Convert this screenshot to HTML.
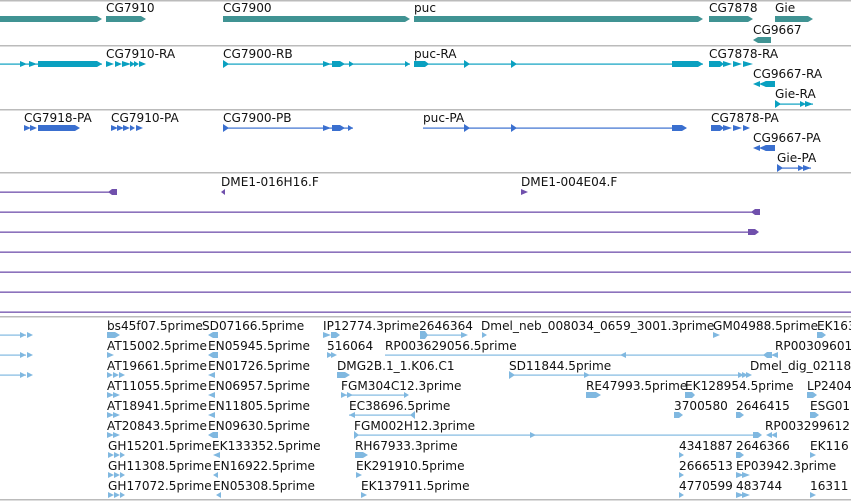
<!DOCTYPE html>
<html><head><meta charset="utf-8"><style>
html,body{margin:0;padding:0;background:#fff;width:851px;height:501px;overflow:hidden}
svg{display:block}
text{font-family:"DejaVu Sans","Liberation Sans",sans-serif;font-size:12.1px;fill:#111}
</style></head><body>
<svg width="851" height="501" viewBox="0 0 851 501">
<g fill="#bbb">
<rect x="0" y="0" width="851" height="1.5"/>
<rect x="0" y="45" width="851" height="1.5"/>
<rect x="0" y="109" width="851" height="1.5"/>
<rect x="0" y="172" width="851" height="1.5"/>
<rect x="0" y="316" width="851" height="1.5"/>
<rect x="0" y="499" width="851" height="1.5"/>
</g>
<g fill="#409393">
<polygon points="0,16 97,16 102,19 97,22 0,22"/>
<polygon points="106,16 141,16 146,19 141,22 106,22"/>
<polygon points="223,16 405,16 410,19 405,22 223,22"/>
<polygon points="414,16 698,16 703,19 698,22 414,22"/>
<polygon points="709,16 748,16 753,19 748,22 709,22"/>
<polygon points="775,16 808,16 813,19 808,22 775,22"/>
<polygon points="771,37 758,37 753,40 758,43 771,43"/>
</g>
<text x="106" y="12">CG7910</text>
<text x="223" y="12">CG7900</text>
<text x="414" y="12">puc</text>
<text x="709" y="12">CG7878</text>
<text x="775" y="12">Gie</text>
<text x="753" y="34">CG9667</text>
<g fill="#0aa0c0" stroke="none">
<rect x="0" y="63.5" width="102" height="1.2"/>
<polygon points="20,61 27,64 20,67"/><polygon points="29,61 37,64 29,67"/>
<polygon points="38,61 97,61 102,64 97,67 38,67"/>
<polygon points="106,61 114,64 106,67"/><polygon points="115,61 122,64 115,67"/><polygon points="122,61 131,64 122,67"/><polygon points="130,61 135,64 130,67"/><polygon points="134,61 139,64 134,67"/><polygon points="139,61 146,64 139,67"/>
<rect x="223" y="63.5" width="187" height="1.2"/>
<polygon points="223,60 229,64 223,68"/>
<polygon points="323,61 331,64 323,67"/><polygon points="332,61 340,61 345,64 340,67 332,67"/><polygon points="349,61 354,64 349,67"/><polygon points="405,61 410,64 405,67"/>
<rect x="414" y="63.5" width="289" height="1.2"/>
<polygon points="414,61 425,61 429,64 425,67 414,67"/>
<polygon points="464,60 470,64 464,68"/><polygon points="511,60 517,64 511,68"/>
<polygon points="672,61 698,61 703,64 698,67 672,67"/>
<polygon points="709,61 720,61 724,64 720,67 709,67"/><polygon points="723,61 732,64 723,67"/><polygon points="733,61 742,64 733,67"/><polygon points="743,61 753,64 743,67"/>
<polygon points="775,81 766,81 761,84 766,87 775,87"/><polygon points="766,81 759,84 766,87"/><polygon points="760,81 753,84 760,87"/>
<rect x="775" y="103.5" width="38" height="1.2"/>
<polygon points="775,100 781,104 775,108"/><polygon points="800,101 806,104 800,107"/><polygon points="805,101 813,104 805,107"/>
</g>
<text x="106" y="58">CG7910-RA</text>
<text x="223" y="58">CG7900-RB</text>
<text x="414" y="58">puc-RA</text>
<text x="709" y="58">CG7878-RA</text>
<text x="753" y="78">CG9667-RA</text>
<text x="775" y="98">Gie-RA</text>
<g fill="#3a6fcf">
<polygon points="24,125 31,128 24,131"/><polygon points="30,125 37,128 30,131"/>
<polygon points="38,125 75,125 80,128 75,131 38,131"/>
<polygon points="111,125 118,128 111,131"/><polygon points="117,125 124,128 117,131"/><polygon points="123,125 130,128 123,131"/><polygon points="130,125 135,128 130,131"/><polygon points="136,125 143,128 136,131"/>
<rect x="223" y="127.5" width="130" height="1.2"/>
<polygon points="223,124 229,128 223,132"/>
<polygon points="323,125 331,128 323,131"/><polygon points="332,125 340,125 345,128 340,131 332,131"/><polygon points="348,125 353,128 348,131"/>
<rect x="423" y="127.5" width="263" height="1.2"/>
<polygon points="464,124 470,128 464,132"/><polygon points="511,124 517,128 511,132"/>
<polygon points="672,125 682,125 687,128 682,131 672,131"/>
<polygon points="711,125 720,125 724,128 720,131 711,131"/><polygon points="723,125 732,128 723,131"/><polygon points="733,125 742,128 733,131"/><polygon points="743,125 750,128 743,131"/>
<polygon points="775,145 766,145 761,148 766,151 775,151"/><polygon points="766,145 759,148 766,151"/><polygon points="760,145 753,148 760,151"/>
<rect x="777" y="167.5" width="34" height="1.2"/>
<polygon points="777,164 783,168 777,172"/><polygon points="798,165 804,168 798,171"/><polygon points="803,165 811,168 803,171"/>
</g>
<text x="24" y="122">CG7918-PA</text>
<text x="111" y="122">CG7910-PA</text>
<text x="223" y="122">CG7900-PB</text>
<text x="423" y="122">puc-PA</text>
<text x="711" y="122">CG7878-PA</text>
<text x="753" y="142">CG9667-PA</text>
<text x="777" y="162">Gie-PA</text>
<g fill="#7050ac">
<rect x="0" y="191.5" width="112" height="1.3"/>
<polygon points="117,189 112,189 108,192 112,195 117,195"/>
<polygon points="225,189 221,192 225,195"/>
<polygon points="521,189 528,192 521,195"/>
<rect x="0" y="211.5" width="755" height="1.3"/>
<polygon points="760,209 755,209 751,212 755,215 760,215"/>
<rect x="0" y="231.5" width="750" height="1.3"/>
<polygon points="748,229 755,229 759,232 755,235 748,235"/>
<rect x="0" y="251.5" width="851" height="1.3"/>
<rect x="0" y="271.5" width="851" height="1.3"/>
<rect x="0" y="291.5" width="851" height="1.3"/>
<rect x="0" y="311.5" width="851" height="1.3"/>
</g>
<text x="221" y="186">DME1-016H16.F</text>
<text x="521" y="186">DME1-004E04.F</text>
<g fill="#80b8e0">
<rect x="0" y="334.5" width="26" height="1.2"/><polygon points="20,332 26,335 20,338"/><polygon points="27,332 33,335 27,338"/>
<rect x="0" y="354.5" width="26" height="1.2"/><polygon points="20,352 26,355 20,358"/><polygon points="27,352 33,355 27,358"/>
<rect x="0" y="374.5" width="26" height="1.2"/><polygon points="20,372 26,375 20,378"/><polygon points="27,372 33,375 27,378"/>
<polygon points="107,332 115,332 120,335 115,338 107,338"/>
<polygon points="218,332 213,332 208,335 213,338 218,338"/>
<polygon points="323,332 331,335 323,338"/><polygon points="331,332 336,332 340,335 336,338 331,338"/>
<rect x="420" y="334.5" width="45" height="1.2"/><polygon points="420,331 425,331 428,335 425,339 420,339"/><polygon points="461,332 468,335 461,338"/>
<polygon points="482,332 487,335 482,338"/>
<polygon points="713,332 720,335 713,338"/>
<polygon points="817,332 822,332 826,335 822,338 817,338"/>
<polygon points="107,352 114,355 107,358"/>
<polygon points="218,352 213,352 208,355 213,358 218,358"/>
<polygon points="327,352 333,355 327,358"/><polygon points="331,352 337,355 331,358"/>
<rect x="385" y="354.5" width="390" height="1.2"/><polygon points="626,352 620,355 626,358"/>
<polygon points="772,352 767,352 763,355 767,358 772,358"/><polygon points="778,352 771,355 778,358"/>
<polygon points="107,372 113,375 107,378"/><polygon points="113,372 119,375 113,378"/><polygon points="119,372 125,375 119,378"/>
<polygon points="215,372 208,375 215,378"/>
<polygon points="337,372 345,372 350,375 345,378 337,378"/>
<rect x="509" y="374.5" width="241" height="1.2"/><polygon points="509,371 515,375 509,379"/><polygon points="584,372 590,375 584,378"/>
<polygon points="738,372 744,375 738,378"/><polygon points="742,372 748,375 742,378"/><polygon points="746,372 752,375 746,378"/>
<polygon points="107,392 114,395 107,398"/><polygon points="113,392 120,395 113,398"/>
<polygon points="215,392 208,395 215,398"/>
<rect x="341" y="394.5" width="66" height="1.2"/><polygon points="341,392 347,395 341,398"/><polygon points="347,392 353,395 347,398"/><polygon points="404,392 409,395 404,398"/>
<polygon points="586,392 596,392 601,395 596,398 586,398"/>
<polygon points="685,392 692,392 695,395 692,398 685,398"/>
<polygon points="807,392 813,392 817,395 813,398 807,398"/>
<polygon points="107,412 114,415 107,418"/><polygon points="113,412 120,415 113,418"/>
<polygon points="215,412 208,415 215,418"/>
<rect x="349" y="414.5" width="66" height="1.2"/><polygon points="355,412 349,415 355,418"/><polygon points="415,411 415,419 410,415"/>
<polygon points="674,412 679,412 683,415 679,418 674,418"/>
<polygon points="736,412 740,412 744,415 740,418 736,418"/>
<polygon points="810,412 815,412 819,415 815,418 810,418"/>
<polygon points="107,432 114,435 107,438"/><polygon points="113,432 120,435 113,438"/>
<polygon points="218,432 213,432 208,435 213,438 218,438"/>
<rect x="354" y="434.5" width="400" height="1.2"/><polygon points="354,431 359,435 354,439"/><polygon points="530,432 536,435 530,438"/>
<polygon points="753,432 758,432 762,435 758,438 753,438"/>
<polygon points="772,432 766,435 772,438"/><polygon points="777,432 771,435 777,438"/>
<polygon points="108,452 114,455 108,458"/><polygon points="114,452 120,455 114,458"/><polygon points="120,452 125,455 120,458"/>
<polygon points="220,452 213,455 220,458"/>
<polygon points="355,452 363,452 368,455 363,458 355,458"/>
<polygon points="679,452 684,455 679,458"/>
<polygon points="736,452 740,452 744,455 740,458 736,458"/>
<polygon points="810,452 816,455 810,458"/>
<polygon points="108,472 114,475 108,478"/><polygon points="114,472 120,475 114,478"/><polygon points="120,472 125,475 120,478"/>
<polygon points="218,472 213,475 218,478"/>
<polygon points="356,472 362,475 356,478"/>
<polygon points="679,472 684,475 679,478"/>
<polygon points="736,472 744,475 736,478"/><polygon points="742,472 750,475 742,478"/>
<polygon points="108,492 114,495 108,498"/><polygon points="114,492 120,495 114,498"/><polygon points="120,492 125,495 120,498"/>
<polygon points="221,492 216,495 221,498"/>
<polygon points="361,492 367,495 361,498"/>
<polygon points="679,492 684,495 679,498"/>
<polygon points="736,492 744,495 736,498"/><polygon points="742,492 750,495 742,498"/>
<polygon points="810,492 816,495 810,498"/>
</g>
<g>
<text x="107" y="330">bs45f07.5prime</text><text x="202" y="330">SD07166.5prime</text><text x="323" y="330">IP12774.3prime2646364</text><text x="481" y="330">Dmel_neb_008034_0659_3001.3prime</text><text x="713" y="330">GM04988.5prime</text><text x="817" y="330">EK163</text>
<text x="107" y="350">AT15002.5prime</text><text x="208" y="350">EN05945.5prime</text><text x="327" y="350">516064</text><text x="385" y="350">RP003629056.5prime</text><text x="775" y="350">RP00309601</text>
<text x="107" y="370">AT19661.5prime</text><text x="208" y="370">EN01726.5prime</text><text x="337" y="370">DMG2B.1_1.K06.C1</text><text x="509" y="370">SD11844.5prime</text><text x="750" y="370">Dmel_dig_02118</text>
<text x="107" y="390">AT11055.5prime</text><text x="208" y="390">EN06957.5prime</text><text x="341" y="390">FGM304C12.3prime</text><text x="586" y="390">RE47993.5prime</text><text x="685" y="390">EK128954.5prime</text><text x="807" y="390">LP2404</text>
<text x="107" y="410">AT18941.5prime</text><text x="208" y="410">EN11805.5prime</text><text x="349" y="410">EC38696.5prime</text><text x="674" y="410">3700580</text><text x="736" y="410">2646415</text><text x="810" y="410">ESG017</text>
<text x="107" y="430">AT20843.5prime</text><text x="208" y="430">EN09630.5prime</text><text x="354" y="430">FGM002H12.3prime</text><text x="765" y="430">RP003299612</text>
<text x="108" y="450">GH15201.5prime</text><text x="212" y="450">EK133352.5prime</text><text x="355" y="450">RH67933.3prime</text><text x="679" y="450">4341887</text><text x="736" y="450">2646366</text><text x="810" y="450">EK116</text>
<text x="108" y="470">GH11308.5prime</text><text x="213" y="470">EN16922.5prime</text><text x="356" y="470">EK291910.5prime</text><text x="679" y="470">2666513</text><text x="736" y="470">EP03942.3prime</text>
<text x="108" y="490">GH17072.5prime</text><text x="213" y="490">EN05308.5prime</text><text x="361" y="490">EK137911.5prime</text><text x="679" y="490">4770599</text><text x="736" y="490">483744</text><text x="810" y="490">16311</text>
</g>
</svg>
</body></html>
